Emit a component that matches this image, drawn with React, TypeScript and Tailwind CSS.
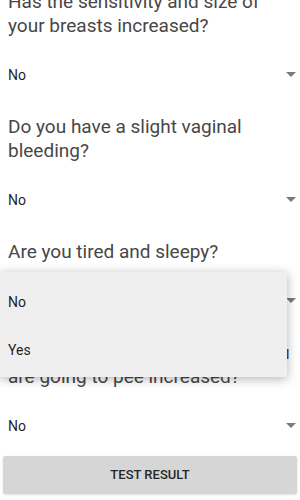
import React from 'react';

const questions = [
  'Has the sensitivity and size of your breasts increased?',
  'Do you have a slight vaginal bleeding?',
  'Are you tired and sleepy?',
  'Has the number of times that you are going to pee increased?',
];

const Arrow = () => (
  <svg width="10" height="5" viewBox="0 0 10 5" className="absolute right-[4px] top-[21px]">
    <path d="M0 0 L10 0 L5 5 Z" fill="#7a7a7a" />
  </svg>
);

const Spinner: React.FC<{ value: string }> = ({ value }) => (
  <div className="relative h-12 mt-[13px] flex items-center pl-2 text-[14px] text-[#1f1f1f]">
    <span>{value}</span>
    <Arrow />
  </div>
);

const App: React.FC = () => {
  return (
    <div className="relative w-[300px] h-[500px] overflow-hidden bg-white font-['Roboto',sans-serif]">
      <div className="-mt-[26px]">
        {questions.map((q, idx) => (
          <div key={idx}>
            <p className="mt-4 px-2 text-[19px] leading-6 text-[#474747]">{q}</p>
            <Spinner value="No" />
          </div>
        ))}
        <div className="mt-[6px] mx-[3px] h-[38px] rounded-[2px] bg-[#d6d6d6] shadow-sm flex items-center justify-center text-[13px] font-medium text-[#262626]">
          TEST RESULT
        </div>
      </div>

      <div className="absolute left-0 top-[272px] w-[287px] pt-[6px] pb-[3px] bg-[#efefef] shadow-[0_2px_10px_rgba(0,0,0,0.3)] text-[14px] text-[#1f1f1f]">
        <div className="h-12 flex items-center pl-2">No</div>
        <div className="h-12 flex items-center pl-2">Yes</div>
      </div>
    </div>
  );
};

export default App;
